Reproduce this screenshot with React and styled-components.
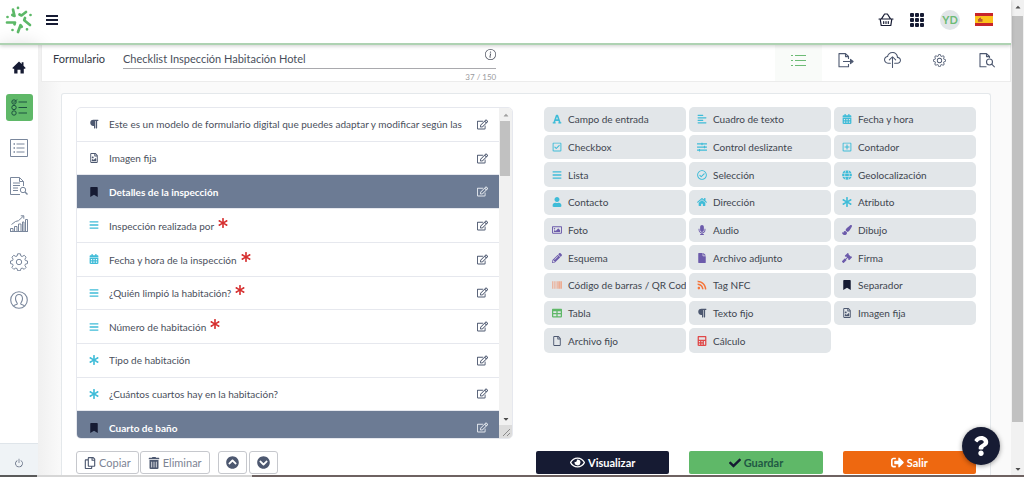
import React, { useState } from "react"
import styled, { createGlobalStyle, css } from "styled-components"
import {
  FaParagraph, FaRegFileImage, FaBookmark, FaBars, FaCalendarAlt, FaAsterisk, FaRegEdit,
  FaFont, FaAlignLeft, FaRegCheckSquare, FaSlidersH, FaRegPlusSquare, FaRegCheckCircle, FaGlobe,
  FaUser, FaHome, FaRegImage, FaMicrophone, FaPaintBrush, FaPencilAlt, FaFile, FaGavel, FaBarcode,
  FaRss, FaTable, FaRegFile, FaCalculator, FaRegCopy, FaTrashAlt, FaChevronCircleUp,
  FaChevronCircleDown, FaRegEye, FaCheck, FaSignOutAlt, FaQuestion, FaCaretUp, FaCaretDown,
} from "react-icons/fa"
import { BsPower, BsGrid3X3GapFill, BsInfoCircle, BsGear, BsCloudUpload } from "react-icons/bs"

const navy = "#161b33"
const cyan = "#3fbcd8"
const purple = "#6c5bab"
const slate = "#4d5870"

const fields = [
  { icon: FaParagraph, color: slate, text: "Este es un modelo de formulario digital que puedes adaptar y modificar según las" },
  { icon: FaRegFileImage, color: slate, text: "Imagen fija" },
  { icon: FaBookmark, color: navy, text: "Detalles de la inspección", section: true },
  { icon: FaBars, color: cyan, text: "Inspección realizada por", required: true },
  { icon: FaCalendarAlt, color: cyan, text: "Fecha y hora de la inspección", required: true },
  { icon: FaBars, color: cyan, text: "¿Quién limpió la habitación?", required: true },
  { icon: FaBars, color: cyan, text: "Número de habitación", required: true },
  { icon: FaAsterisk, color: cyan, text: "Tipo de habitación" },
  { icon: FaAsterisk, color: cyan, text: "¿Cuántos cuartos hay en la habitación?" },
  { icon: FaBookmark, color: navy, text: "Cuarto de baño", section: true },
]

const tools = [
  [FaFont, cyan, "Campo de entrada"],
  [FaAlignLeft, cyan, "Cuadro de texto"],
  [FaCalendarAlt, cyan, "Fecha y hora"],
  [FaRegCheckSquare, cyan, "Checkbox"],
  [FaSlidersH, cyan, "Control deslizante"],
  [FaRegPlusSquare, cyan, "Contador"],
  [FaBars, cyan, "Lista"],
  [FaRegCheckCircle, cyan, "Selección"],
  [FaGlobe, cyan, "Geolocalización"],
  [FaUser, cyan, "Contacto"],
  [FaHome, cyan, "Dirección"],
  [FaAsterisk, cyan, "Atributo"],
  [FaRegImage, purple, "Foto"],
  [FaMicrophone, purple, "Audio"],
  [FaPaintBrush, purple, "Dibujo"],
  [FaPencilAlt, purple, "Esquema"],
  [FaFile, purple, "Archivo adjunto"],
  [FaGavel, purple, "Firma"],
  [FaBarcode, "#f28c62", "Código de barras / QR Code"],
  [FaRss, "#f5753a", "Tag NFC"],
  [FaBookmark, navy, "Separador"],
  [FaTable, "#5fb868", "Tabla"],
  [FaParagraph, slate, "Texto fijo"],
  [FaRegFileImage, slate, "Imagen fija"],
  [FaRegFile, slate, "Archivo fijo"],
  [FaCalculator, "#e04848", "Cálculo"],
]

const Logo = () => (
  <svg width="28" height="28" viewBox="0 0 28 28" fill="none" stroke="#5cb867" strokeWidth="2.7" strokeLinecap="round" strokeLinejoin="round">
    <path d="M8 3.500 9.500 10 7.300 9" />
    <path d="m14.500 8.500 2 1 4.500-3.500" />
    <path d="M2 16.500h8L9.500 18.300" />
    <path d="m20 12-.8 2.300L25 19" />
    <path d="m13 26 2.500-6.800 1.300 1.600" />
    <path d="M13 1.900h.01M25.500 9h.01M2.500 11h.01M7.500 24h.01M22 23.300h.01" />
  </svg>
)

const HouseIcon = () => (
  <svg width="14" height="13" viewBox="0 0 14 13" fill={navy}>
    <path d="M7 .5 9.700 3V1.200h1.800v3.500L13.700 7l-.7.700H11.800v4.800H8.500V8.800h-3v3.700H2.200V7.700H1L.3 7z" />
  </svg>
)

const BasketIcon = () => (
  <svg width="16" height="14" viewBox="0 0 16 14" fill="none" stroke={navy} strokeWidth="1.200" strokeLinecap="round" strokeLinejoin="round">
    <path d="M1 6h14M2.200 6.200l1 6.300h9.600l1-6.300M3.500 5.800 6.600 1h2.800l3.100 4.800M5.700 8.500v2M8 8.500v2M10.300 8.500v2" />
  </svg>
)

const TasksIcon = () => (
  <svg width="16" height="17" viewBox="0 0 16 17" fill="none" stroke="#1c5240" strokeWidth="1">
    <circle cx="3" cy="3" r="2.200" />
    <circle cx="3" cy="8.500" r="2.200" />
    <circle cx="3" cy="14" r="2.200" />
    <path d="m2 2.500 1 1L6 .5M7.500 3H16M7.500 8.500H16M7.500 14H16" />
  </svg>
)

const ListBoxIcon = () => (
  <svg width="18" height="18" viewBox="0 0 18 18" fill="none" stroke="#7a879c" strokeWidth="1">
    <path d="M.5.5h17v17H.5zM6.500 5h8M6.500 9h8M6.500 13h8" />
    <path d="M3.500 5h1.500M3.500 9h1.500M3.500 13h1.500" strokeWidth="1.500" />
  </svg>
)

const ReportIcon = () => (
  <svg width="18" height="18" viewBox="0 0 18 18" fill="none" stroke="#7a879c" strokeWidth="1">
    <path d="M10 17.500H.5V.5h9l4 4V9M9.500.5v4h4M3 6h7M3 8.500h7M3 11h5M3 13.500h5" />
    <circle cx="13" cy="13" r="2.700" />
    <path d="m15 15 2.500 2.500" strokeWidth="1.400" />
  </svg>
)

const ChartIcon = () => (
  <svg width="18" height="17" viewBox="0 0 18 17" fill="none" stroke="#7a879c" strokeWidth="1">
    <path d="M.5 16.500v-3h2.500v3zM4.500 16.500v-5H7v5zM8.500 16.500V9H11v7.500zM12.500 16.500V7H14v9.500zM15.500 16.500v-12h2v12zM0 16.500h18M1.500 9.500l4-3 3-.8L13.500 1M10.800.8h3v3" />
  </svg>
)

const GearIcon = () => (
  <svg width="18" height="18" viewBox="0 0 18 18" fill="none" stroke="#7a879c" strokeWidth="1" strokeLinejoin="round">
    <path d="M7.600.8h2.800l.5 2.200 1.300.5 2-1.200 1.900 1.900-1.200 2 .5 1.300 2.100.5v2.600l-2.100.5-.5 1.300 1.200 2-1.900 1.900-2-1.200-1.300.5-.5 2.100H7.600l-.5-2.100-1.300-.5-2 1.200-1.900-1.900 1.200-2-.5-1.300-2.100-.5V8l2.100-.5.5-1.300-1.200-2 1.900-1.900 2 1.200L7.100 3z" />
    <circle cx="9" cy="9" r="2.700" />
  </svg>
)

const ProfileIcon = () => (
  <svg width="18" height="18" viewBox="0 0 18 18" fill="none" stroke="#7a879c" strokeWidth="1.100">
    <circle cx="9" cy="9" r="8.300" />
    <path d="M3.500 15c.8-1.300 3.500-1.200 3.800-2.200.2-.8-1.800-2.300-1.800-5C5.500 5 7 3.500 9 3.500s3.500 1.500 3.500 4.300c0 2.700-2 4.200-1.800 5 .3 1 3 .9 3.800 2.200" />
  </svg>
)

const ExportIcon = () => (
  <svg width="16" height="15" viewBox="0 0 16 15" fill="none" stroke={slate} strokeWidth="1.100" strokeLinejoin="round">
    <path d="M10.500 6V3.500L7.500.6H1v13.200h9.500V11M7.500.6v3h3M5 8.500h10M12.500 6.300l2.600 2.200-2.600 2.200z" />
  </svg>
)

const SearchFileIcon = () => (
  <svg width="16" height="15" viewBox="0 0 16 15" fill="none" stroke={slate} strokeWidth="1.100" strokeLinejoin="round">
    <path d="M10.500 5V3.500L7.500.6H1v13.200h6.500M7.500.6v3h3" />
    <circle cx="10.500" cy="9" r="3" />
    <path d="m12.700 11.200 3 3" />
  </svg>
)

const LinesIcon = () => (
  <svg width="15" height="12" viewBox="0 0 15 12" stroke="#6dbb76" strokeWidth="1">
    <path d="M0 1.500h2M4 1.500h11M0 6.500h2M4 6.500h11M0 11.500h2M4 11.500h11" />
  </svg>
)

const Flag = () => (
  <svg width="18" height="13" viewBox="0 0 18 13" role="img" aria-label="Español">
    <path fill="#c8242b" d="M0 0h18v13H0z" />
    <path fill="#fcc21b" d="M0 3h18v7H0z" />
    <path fill="#b8592c" d="M3 8.800V6h1V5h1l.5-.8L6 5v1h1.500v2.800z" />
  </svg>
)

const ResizeGrip = () => (
  <svg width="12" height="12" viewBox="0 0 12 12" stroke="#8b8b8b" strokeWidth="1">
    <path d="m4 11 7-7M8 11l3-3" />
  </svg>
)

export default function App() {
  const [title, setTitle] = useState("Checklist Inspección Habitación Hotel")

  return (
    <>
      <GlobalStyle />
      <Screen>
        <Window>
          <Page>
            <Header>
              <Logo />
              <IconButton aria-label="Menú">
                <MenuLines />
              </IconButton>
              <HeaderRight>
                <IconButton aria-label="Cesta"><BasketIcon /></IconButton>
                <IconButton aria-label="Aplicaciones"><BsGrid3X3GapFill size={16} /></IconButton>
                <Avatar>YD</Avatar>
                <IconButton aria-label="Idioma"><Flag /></IconButton>
              </HeaderRight>
            </Header>
            <Body>
              <Sidebar>
                <NavLink href="#inicio" aria-label="Inicio"><HouseIcon /></NavLink>
                <NavLink href="#formularios" aria-label="Formularios" $active><TasksIcon /></NavLink>
                <NavLink href="#registros" aria-label="Registros"><ListBoxIcon /></NavLink>
                <NavLink href="#informes" aria-label="Informes"><ReportIcon /></NavLink>
                <NavLink href="#graficos" aria-label="Gráficos"><ChartIcon /></NavLink>
                <NavLink href="#ajustes" aria-label="Ajustes"><GearIcon /></NavLink>
                <NavLink href="#perfil" aria-label="Perfil"><ProfileIcon /></NavLink>
                <PowerButton aria-label="Cerrar sesión"><BsPower size={10} /></PowerButton>
              </Sidebar>
              <Main>
                <Toolbar>
                  <TitleLabel htmlFor="titulo">Formulario</TitleLabel>
                  <TitleField>
                    <TitleLine>
                      <TitleInput id="titulo" maxLength={150} value={title} onChange={(e) => setTitle(e.target.value)} />
                      <BsInfoCircle size={11} />
                    </TitleLine>
                    <Counter>{title.length} / 150</Counter>
                  </TitleField>
                  <Tabs>
                    <Tab aria-label="Campos" $active><LinesIcon /></Tab>
                    <Tab aria-label="Exportar"><ExportIcon /></Tab>
                    <Tab aria-label="Publicar"><BsCloudUpload size={17} /></Tab>
                    <Tab aria-label="Configurar"><BsGear size={13} /></Tab>
                    <Tab aria-label="Vista previa"><SearchFileIcon /></Tab>
                  </Tabs>
                </Toolbar>
                <Card>
                  <Columns>
                    <FieldPanel>
                      <FieldList>
                        {fields.map((f) => (
                          <Field key={f.text} $section={f.section}>
                            <FieldIcon $color={f.color}><f.icon size={10} /></FieldIcon>
                            <FieldText>
                              {f.text}
                              {f.required && <Required />}
                            </FieldText>
                            <EditButton aria-label="Editar" $section={f.section}><FaRegEdit size={11} /></EditButton>
                          </Field>
                        ))}
                      </FieldList>
                      <ListScroll>
                        <ScrollArrow $faded><FaCaretUp size={8} /></ScrollArrow>
                        <ListThumb />
                        <ScrollArrow><FaCaretDown size={8} /></ScrollArrow>
                        <Grip><ResizeGrip /></Grip>
                      </ListScroll>
                    </FieldPanel>
                    <Palette>
                      {tools.map(([Icon, color, text]) => (
                        <Tool key={text}>
                          <ToolIcon $color={color}><Icon size={10} /></ToolIcon>
                          {text}
                        </Tool>
                      ))}
                    </Palette>
                  </Columns>
                  <Footer>
                    <EditActions>
                      <OutlineButton><FaRegCopy size={12} />Copiar</OutlineButton>
                      <OutlineButton><FaTrashAlt size={12} />Eliminar</OutlineButton>
                      <MoveButtons>
                        <OutlineButton aria-label="Subir"><FaChevronCircleUp size={13} /></OutlineButton>
                        <OutlineButton aria-label="Bajar"><FaChevronCircleDown size={13} /></OutlineButton>
                      </MoveButtons>
                    </EditActions>
                    <FormActions>
                      <ActionButton $bg={navy} $color="#fff"><FaRegEye size={15} />Visualizar</ActionButton>
                      <ActionButton $bg="#5fb868" $color="#1f5844"><FaCheck size={12} color={navy} />Guardar</ActionButton>
                      <ActionButton $bg="#ee6810" $color="#fff"><FaSignOutAlt size={13} />Salir</ActionButton>
                    </FormActions>
                  </Footer>
                </Card>
              </Main>
            </Body>
          </Page>
          <PageScroll>
            <ScrollArrow><FaCaretUp size={8} /></ScrollArrow>
            <PageThumb />
            <ScrollArrow><FaCaretDown size={8} /></ScrollArrow>
          </PageScroll>
        </Window>
        <TaskStrip><StripDark /><StripLight /><StripBrown /></TaskStrip>
        <HelpButton aria-label="Ayuda"><FaQuestion size={20} /></HelpButton>
      </Screen>
    </>
  )
}

function Required() {
  return <RequiredMark aria-label="obligatorio"><FaAsterisk size={10} /></RequiredMark>
}

const GlobalStyle = createGlobalStyle`
  * { box-sizing: border-box; }
  body {
    margin: 0;
    background: #fff;
    color: #4a4f5c;
    font-family: Lato, "Liberation Sans", sans-serif;
    font-size: 10px;
    line-height: 14px;
  }
  button, input { font: inherit; color: inherit; padding: 0; border: 0; background: none; }
  button { cursor: pointer; }
  svg { display: block; flex: none; }
`

const Screen = styled.div`
  display: flex;
  flex-direction: column;
  height: 100vh;
  overflow: hidden;
`

const Window = styled.div`
  flex: 1;
  display: flex;
  min-height: 0;
`

const Page = styled.div`
  flex: 1;
  min-width: 0;
  display: flex;
  flex-direction: column;
`

const Header = styled.header`
  display: flex;
  align-items: center;
  gap: 13px;
  height: 45px;
  padding: 0 18px 4px 5px;
  border-bottom: 2px solid #aed2b2;
  box-shadow: 0 1px 4px rgba(0, 0, 0, 0.2);
  z-index: 1;
`

const HeaderRight = styled.div`
  display: flex;
  align-items: center;
  gap: 15px;
  margin-left: auto;
  color: ${navy};
`

const IconButton = styled.button`
  display: flex;
`

const MenuLines = styled.span`
  width: 12px;
  height: 10px;
  border-top: 2px solid ${navy};
  border-bottom: 2px solid ${navy};
  background: linear-gradient(${navy}, ${navy}) center / 100% 2px no-repeat;
`

const Avatar = styled.span`
  display: grid;
  place-items: center;
  width: 20px;
  height: 20px;
  border-radius: 50%;
  background: #e1e5e8;
  color: #6dbb76;
  font-size: 11px;
  font-weight: 700;
`

const Body = styled.div`
  flex: 1;
  display: flex;
  min-height: 0;
`

const Sidebar = styled.nav`
  display: flex;
  flex-direction: column;
  align-items: center;
  gap: 11px;
  width: 38px;
  padding-top: 9px;
  background: #fff;
  box-shadow: 0 0 20px rgba(0, 0, 0, 0.14);
`

const NavLink = styled.a`
  display: grid;
  place-items: center;
  width: 27px;
  height: 27px;
  border-radius: 3px;
  ${props => props.$active && css`
    margin: 2px 0;
    background: #5fb868;
  `}
`

const PowerButton = styled.button`
  display: grid;
  place-items: center;
  width: 100%;
  height: 32px;
  margin-top: auto;
  padding-top: 6px;
  border-top: 1px solid #dfe5ea;
  background: #eff3f6;
  color: ${slate};
`

const Main = styled.main`
  flex: 1;
  display: flex;
  flex-direction: column;
  min-width: 0;
  padding-left: 3px;
  background: linear-gradient(90deg, #f0f0f0, #fafafa 24px);
`

const Toolbar = styled.div`
  display: flex;
  height: 37px;
  padding-left: 11px;
  background: #fff;
  border: 1px solid #ececec;
  border-top: 0;
`

const TitleLabel = styled.label`
  width: 70px;
  padding-top: 7px;
  color: #333845;
  font-size: 11px;
`

const TitleField = styled.div`
  width: 39%;
`

const TitleLine = styled.div`
  display: flex;
  align-items: flex-start;
  height: 24px;
  padding-top: 4px;
  border-bottom: 1px solid #a9a9ad;
`

const TitleInput = styled.input`
  flex: 1;
  height: 18px;
  outline: 0;
  font-size: 11px;
`

const Counter = styled.div`
  padding-top: 2px;
  color: #9a9a9e;
  font-size: 8px;
  line-height: 12px;
  text-align: right;
`

const Tabs = styled.div`
  display: flex;
  margin-left: auto;
`

const Tab = styled.button`
  display: grid;
  place-items: center;
  width: 47px;
  padding-bottom: 6px;
  color: ${slate};
  ${props => props.$active && css`background: #f9fbf9;`}
`

const Card = styled.section`
  flex: 1;
  display: flex;
  flex-direction: column;
  margin: 11px 20px 0;
  padding: 13px 14px 0;
  background: #fff;
  border: 1px solid #e4e8eb;
  border-bottom: 0;
  border-radius: 3px 3px 0 0;
`

const Columns = styled.div`
  display: flex;
  align-items: flex-start;
  gap: 31px;
`

const FieldPanel = styled.div`
  flex: 434;
  display: flex;
  min-width: 0;
  height: 332px;
  border: 1px solid #e6e8ee;
  border-radius: 5px;
  overflow: hidden;
`

const FieldList = styled.ul`
  flex: 1;
  display: grid;
  grid-auto-rows: 1fr;
  min-width: 0;
  height: 337px;
  margin: 0;
  padding: 0;
  list-style: none;
`

const Field = styled.li`
  display: flex;
  align-items: center;
  min-width: 0;
  padding: 0 11px 0 12px;
  border-bottom: 1px solid #e6e8ee;
  ${props => props.$section && css`
    background: #6c7b94;
    color: #fff;
    font-weight: 700;
  `}
`

const FieldIcon = styled.span`
  display: flex;
  width: 20px;
  color: ${props => props.$color};
`

const FieldText = styled.span`
  flex: 1;
  min-width: 0;
  overflow: hidden;
  white-space: nowrap;
`

const RequiredMark = styled.span`
  display: inline-block;
  margin-left: 4px;
  color: #d62f2f;
  vertical-align: 2px;
`

const EditButton = styled.button`
  display: flex;
  margin-left: 5px;
  color: ${props => props.$section ? "#e4e8ee" : slate};
`

const ListScroll = styled.div`
  display: flex;
  flex-direction: column;
  width: 13px;
  background: #f1f1f1;
`

const ScrollArrow = styled.span`
  display: grid;
  place-items: center;
  height: 13px;
  color: ${props => props.$faded ? "#a0a0a0" : "#4e4e4e"};
`

const ListThumb = styled.div`
  height: 55px;
  margin: 0 2px auto 1px;
  background: #c1c1c1;
`

const Grip = styled.div`
  height: 13px;
  background: #dcdcdc;
`

const Palette = styled.div`
  flex: 431;
  display: grid;
  grid-template-columns: repeat(3, minmax(0, 1fr));
  grid-auto-rows: 1fr;
  gap: 3px;
  height: 246px;
`

const Tool = styled.button`
  display: flex;
  align-items: center;
  padding-left: 8px;
  border-radius: 5px;
  background: #e2e6e9;
  color: #40454f;
  white-space: nowrap;
  overflow: hidden;
`

const ToolIcon = styled.span`
  display: flex;
  justify-content: center;
  width: 10px;
  margin-right: 6px;
  color: ${props => props.$color};
`

const Footer = styled.div`
  display: flex;
  justify-content: space-between;
  margin-top: 12px;
`

const EditActions = styled.div`
  display: flex;
  gap: 1px;
`

const MoveButtons = styled.div`
  display: flex;
  gap: 2px;
  margin-left: 7px;
`

const OutlineButton = styled.button`
  display: flex;
  align-items: center;
  justify-content: center;
  gap: 3px;
  height: 23px;
  padding: 0 7px;
  border: 1px solid #c6c8cd;
  border-radius: 3px;
  color: #7d8494;
  font-size: 11px;
  svg { color: ${slate}; }
`

const FormActions = styled.div`
  display: flex;
  gap: 20px;
  flex: 0 0 440px;
`

const ActionButton = styled.button`
  display: flex;
  flex: 1;
  align-items: center;
  justify-content: center;
  gap: 3px;
  height: 23px;
  border-radius: 2px;
  background: ${props => props.$bg};
  color: ${props => props.$color};
  font-size: 11px;
  font-weight: 700;
`

const PageScroll = styled.div`
  display: flex;
  flex-direction: column;
  width: 13px;
  background: #f1f1f1;
`

const PageThumb = styled.div`
  height: 406px;
  margin: 3px 1px auto;
  background: #c1c1c1;
`

const TaskStrip = styled.div`
  display: flex;
  height: 2px;
`

const StripDark = styled.div`
  width: 37px;
  background: #5a5a5a;
`

const StripLight = styled.div`
  width: 215px;
  background: #d6d6d6;
`

const StripBrown = styled.div`
  flex: 1;
  background: #6e6261;
`

const HelpButton = styled.button`
  position: fixed;
  right: 24px;
  bottom: 12px;
  display: grid;
  place-items: center;
  width: 38px;
  height: 38px;
  border-radius: 50%;
  background: ${navy};
  color: #fff;
  box-shadow: 0 1px 5px rgba(0, 0, 0, 0.4);
`
